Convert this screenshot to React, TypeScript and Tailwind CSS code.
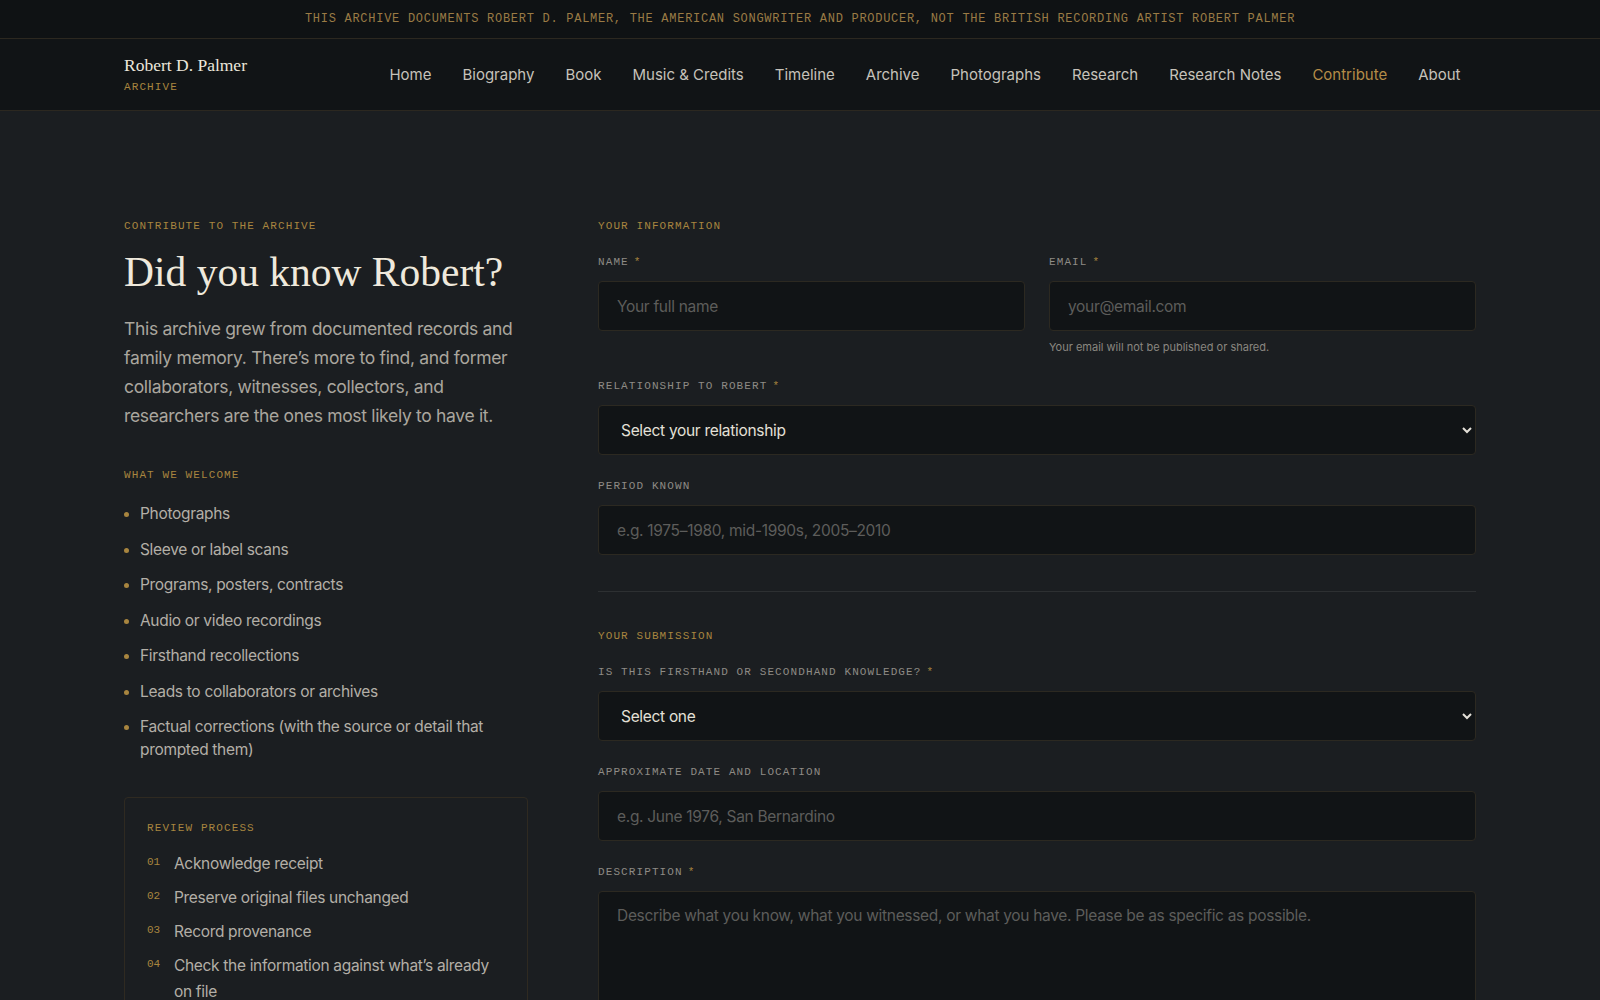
import React from 'react';

const navLinks = [
  'Home',
  'Biography',
  'Book',
  'Music & Credits',
  'Timeline',
  'Archive',
  'Photographs',
  'Research',
  'Research Notes',
  'Contribute',
  'About',
];

const welcome = [
  'Photographs',
  'Sleeve or label scans',
  'Programs, posters, contracts',
  'Audio or video recordings',
  'Firsthand recollections',
  'Leads to collaborators or archives',
  'Factual corrections (with the source or detail that prompted them)',
];

const review = [
  'Acknowledge receipt',
  'Preserve original files unchanged',
  'Record provenance',
  "Check the information against what\u2019s already on file",
];

const Eyebrow = ({ children, className = '' }: { children: React.ReactNode; className?: string }) => (
  <p className={`font-['Liberation_Mono',monospace] text-[11px] leading-4 tracking-[0.1em] text-[#a8853f] uppercase ${className}`}>
    {children}
  </p>
);

const FieldLabel = ({ children, required }: { children: React.ReactNode; required?: boolean }) => (
  <label className="mb-[11px] flex items-center gap-[5px] font-['Liberation_Mono',monospace] text-[11px] leading-4 tracking-[0.1em] text-[#8e8b85] uppercase">
    {children}
    {required && <span className="text-[#a8853f]">*</span>}
  </label>
);

const inputCls =
  'h-[50px] w-full rounded-[4px] border border-[#2c2921] bg-[#111416] px-[18px] text-[15.5px] tracking-[-0.02em] text-[#e6e2da] placeholder:text-[#5d5d5b] outline-none';

const selectCls =
  'h-[50px] w-full rounded-[4px] border border-[#2c2921] bg-[#111416] pl-[18px] pr-2 text-[15.5px] tracking-[-0.02em] text-[#e4e0d8] outline-none [color-scheme:dark]';

export default function App() {
  return (
    <div className="min-h-screen bg-[#1b1e21] font-['Inter',sans-serif] tracking-[-0.02em]">
      <div className="flex h-[39px] items-center justify-center border-b border-[#2c2820] bg-[#0f1214]">
        <p className="font-['Liberation_Mono',monospace] text-[12px] tracking-[0.06em] text-[#9a7b45]">
          THIS ARCHIVE DOCUMENTS ROBERT D. PALMER, THE AMERICAN SONGWRITER AND PRODUCER, NOT THE BRITISH RECORDING ARTIST ROBERT PALMER
        </p>
      </div>

      <header className="h-[72px] border-b border-[#2c2820] bg-[#111416]">
        <div className="mx-auto flex h-full max-w-[1400px] items-center justify-between px-6">
          <div>
            <p className="font-['Liberation_Serif',serif] text-[17.5px] leading-[22px] tracking-normal text-[#ece7dc]">
              Robert D. Palmer
            </p>
            <p className="mt-[3px] font-['Liberation_Mono',monospace] text-[11px] leading-4 tracking-[0.1em] text-[#a8853f]">
              ARCHIVE
            </p>
          </div>
          <nav className="flex items-center pt-[2px]">
            {navLinks.map((l) => (
              <a
                key={l}
                href="#"
                className={`px-[15.5px] text-[15px] tracking-normal ${l === 'Contribute' ? 'text-[#b48c48]' : 'text-[#c6c2ba]'}`}
              >
                {l}
              </a>
            ))}
          </nav>
        </div>
      </header>

      <main className="mx-auto max-w-[1400px] px-6 pt-[107px] pb-24">
        <div className="grid grid-cols-[404px_1fr] gap-[70px]">
          <aside>
            <Eyebrow>Contribute to the archive</Eyebrow>
            <h1 className="mt-[14px] font-['Liberation_Serif',serif] text-[41.5px] leading-[48px] tracking-normal text-[#efe9dc]">
              Did you know Robert?
            </h1>
            <p className="mt-[18px] text-[17.5px] leading-[29px] text-[#aaa69e]">
              This archive grew from documented records and family memory. There&rsquo;s more to find, and former
              collaborators, witnesses, collectors, and researchers are the ones most likely to have it.
            </p>

            <Eyebrow className="mt-[37px]">What we welcome</Eyebrow>
            <ul className="mt-[20px] flex flex-col gap-[13px]">
              {welcome.map((w) => (
                <li key={w} className="flex gap-[11px] text-[15.5px] leading-[22.5px] text-[#b3afa7]">
                  <span className="mt-[9px] h-[5px] w-[5px] shrink-0 rounded-full bg-[#a8853f]" />
                  <span>{w}</span>
                </li>
              ))}
            </ul>

            <div className="mt-9 rounded-[4px] border border-[#2f2a21] px-[22px] pt-[22px] pb-6">
              <Eyebrow>Review process</Eyebrow>
              <ol className="mt-[15px] flex flex-col gap-2">
                {review.map((r, i) => (
                  <li key={r} className="flex text-[15.5px] leading-[26px] text-[#b3afa7]">
                    <span className="w-[27px] shrink-0 font-['Liberation_Mono',monospace] text-[11px] leading-[22px] tracking-normal text-[#a8853f]">
                      {String(i + 1).padStart(2, '0')}
                    </span>
                    <span>{r}</span>
                  </li>
                ))}
              </ol>
            </div>
          </aside>

          <form className="flex flex-col">
            <Eyebrow className="mb-5">Your information</Eyebrow>
            <div className="flex flex-col gap-[23px]">
              <div className="grid grid-cols-2 gap-6">
                <div>
                  <FieldLabel required>Name</FieldLabel>
                  <input className={inputCls} placeholder="Your full name" />
                </div>
                <div>
                  <FieldLabel required>Email</FieldLabel>
                  <input className={inputCls} placeholder="your@email.com" />
                  <p className="mt-2 text-[11px] leading-4 tracking-normal text-[#8a8780]">
                    Your email will not be published or shared.
                  </p>
                </div>
              </div>
              <div>
                <FieldLabel required>Relationship to Robert</FieldLabel>
                <select className={selectCls} defaultValue="">
                  <option value="">Select your relationship</option>
                  <option>Family</option>
                  <option>Collaborator</option>
                  <option>Friend</option>
                  <option>Researcher</option>
                </select>
              </div>
              <div>
                <FieldLabel>Period known</FieldLabel>
                <input className={inputCls} placeholder="e.g. 1975–1980, mid-1990s, 2005–2010" />
              </div>
            </div>

            <hr className="mt-9 mb-9 border-t border-[#2d3032]" />

            <Eyebrow className="mb-5">Your submission</Eyebrow>
            <div className="flex flex-col gap-[23px]">
              <div>
                <FieldLabel required>Is this firsthand or secondhand knowledge?</FieldLabel>
                <select className={selectCls} defaultValue="">
                  <option value="">Select one</option>
                  <option>Firsthand</option>
                  <option>Secondhand</option>
                </select>
              </div>
              <div>
                <FieldLabel>Approximate date and location</FieldLabel>
                <input className={inputCls} placeholder="e.g. June 1976, San Bernardino" />
              </div>
              <div>
                <FieldLabel required>Description</FieldLabel>
                <textarea
                  className="h-[180px] w-full resize-none rounded-[4px] border border-[#2c2921] bg-[#111416] px-[18px] py-3 text-[15.5px] leading-6 tracking-[-0.02em] text-[#e6e2da] placeholder:text-[#5d5d5b] outline-none"
                  placeholder="Describe what you know, what you witnessed, or what you have. Please be as specific as possible."
                />
              </div>
            </div>
          </form>
        </div>
      </main>
    </div>
  );
}
